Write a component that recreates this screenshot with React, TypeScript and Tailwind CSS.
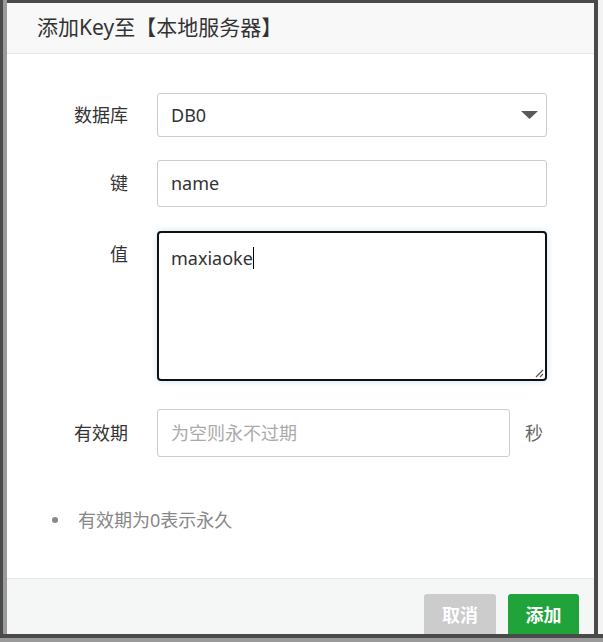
import React from "react";

const FONT = { fontFamily: '"Noto Sans", "Noto Sans CJK SC", sans-serif' };

function FieldRow({
  label,
  children,
  alignTop = false,
  className = "",
}: {
  label: string;
  children: React.ReactNode;
  alignTop?: boolean;
  className?: string;
}) {
  return (
    <div className={`flex ${alignTop ? "items-start" : "items-center"} ${className}`}>
      <div
        className={`w-[121px] shrink-0 text-right text-[18px] text-[#333] ${
          alignTop ? "pt-[10px] leading-[26px]" : ""
        }`}
      >
        {label}
      </div>
      <div className="ml-[29px] flex flex-1 items-center">{children}</div>
    </div>
  );
}

export default function App() {
  return (
    <div className="flex h-[642px] w-[603px] flex-col overflow-hidden bg-[#4a4a4a]" style={FONT}>
      <div className="flex h-[634px] shrink-0">
        <div className="w-[3px] shrink-0" />
        <div className="w-[4px] shrink-0 bg-[#9a9a9a]" />
        {/* dialog */}
        <div className="mt-[3px] flex h-[631px] w-[587px] shrink-0 flex-col overflow-hidden bg-white">
          {/* header */}
          <div className="flex h-[51px] shrink-0 items-center border-b border-[#e5e5e5] bg-[#f8f8f8] pl-[30px] text-[21px] text-[#333]">
            添加Key至【本地服务器】
          </div>

          {/* body */}
          <div className="flex flex-1 flex-col pt-[39px] pr-[47px]">
            <FieldRow label="数据库">
              <div className="flex h-[44px] w-full items-center justify-between rounded-[3px] border border-[#ccc] pl-[13px] pr-[8px] text-[18px] text-[#333]">
                <span>DB0</span>
                <svg width="17" height="8" viewBox="0 0 17 8">
                  <path d="M0 0 H17 L8.5 8 Z" fill="#595959" />
                </svg>
              </div>
            </FieldRow>

            <FieldRow label="键" className="mt-[23px]">
              <div className="flex h-[47px] w-full items-center rounded-[3px] border border-[#ccc] pl-[13px] text-[18px] text-[#333]">
                name
              </div>
            </FieldRow>

            <FieldRow label="值" alignTop className="mt-[24px]">
              <div className="relative h-[150px] w-full rounded-[4px] border-2 border-[#111] px-[12px] pt-[10px] text-[18px] leading-[26px] text-[#333] shadow-[0_0_6px_rgba(102,175,233,0.35)]">
                <span>maxiaoke</span>
                <span className="inline-block h-[22px] w-[1.5px] translate-y-[4px] bg-black" />
                <svg className="absolute bottom-[1px] right-[1px]" width="10" height="10" viewBox="0 0 10 10">
                  <path d="M9 2 L2 9 M9 6 L6 9" stroke="#555" strokeWidth="1.2" />
                </svg>
              </div>
            </FieldRow>

            <FieldRow label="有效期" className="mt-[28px]">
              <div className="flex h-[48px] w-[353px] items-center rounded-[3px] border border-[#ccc] pl-[13px] text-[18px] text-[#aaa]">
                为空则永不过期
              </div>
              <span className="ml-[15px] text-[18px] text-[#666]">秒</span>
            </FieldRow>

            <ul className="mt-[50px] pl-[45px] text-[18px] leading-[26px] text-[#888]">
              <li className="flex items-center">
                <span className="mr-[20px] inline-block h-[6px] w-[6px] rounded-full bg-[#888]" />
                有效期为0表示永久
              </li>
            </ul>
          </div>

          {/* footer */}
          <div className="flex h-[56px] shrink-0 items-start justify-end gap-[12px] border-t border-[#e8e8e8] bg-[#f5f7f7] pr-[15px] pt-[15px]">
            <button className="flex h-[42px] w-[72px] items-center justify-center rounded-[3px] bg-[#cccccc] text-[18px] font-bold text-white">
              取消
            </button>
            <button className="flex h-[42px] w-[71px] items-center justify-center rounded-[3px] bg-[#21a33b] text-[18px] font-bold text-white">
              添加
            </button>
          </div>
        </div>
        <div className="w-[4px] shrink-0" />
        <div className="w-[5px] shrink-0 bg-[#f3f3f3]" />
      </div>
      <div className="h-[4px] shrink-0" />
      <div className="flex-1 bg-[#9a9a9a]" />
    </div>
  );
}
